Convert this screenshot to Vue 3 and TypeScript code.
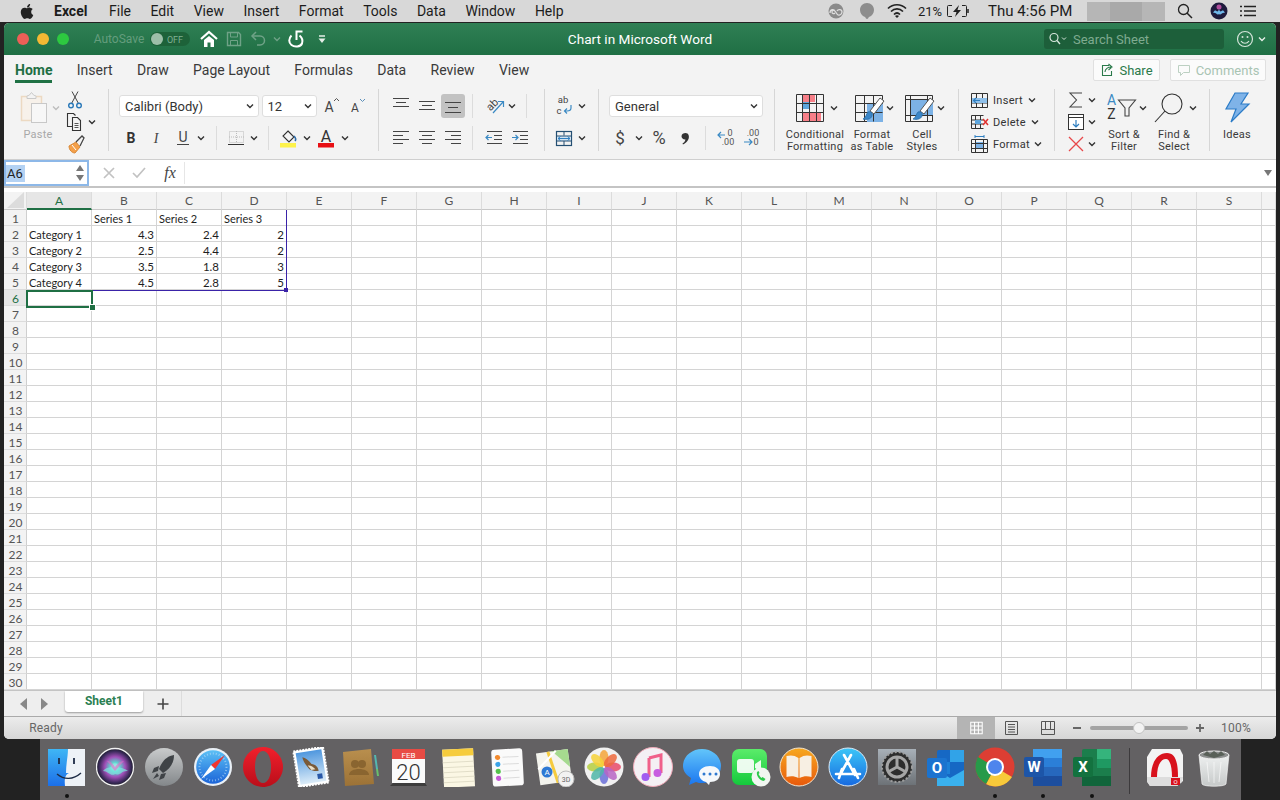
<script setup lang="ts">
import { h, type FunctionalComponent } from 'vue'

type Spec = [string, number, number?, string?, number?]
interface Item { name: string; ml: number; w: number; h: number; cls: string }

function row(x0: number, spec: Spec[]): Item[] {
  let prev = x0
  return spec.map(([name, c, w = 20, cls = '', ht]) => {
    const ml = c - w / 2 - prev
    prev = c + w / 2
    return { name, ml, w, h: ht ?? w, cls }
  })
}

const line = (x1: number, y1: number, x2: number, y2: number, c = '') =>
  `<path d="M${x1} ${y1}H${x2}V${y2}" ${c}/>`
const hl = (ys: [number, number, number][]) => ys.map(([y, a, b]) => line(a, y, b, y)).join('')
const tx = (x: number, y: number, s: string, size: number, fill = '#333', extra = '') =>
  `<text x="${x}" y="${y}" font-size="${size}" fill="${fill}" stroke="none" text-anchor="middle" ${extra}>${s}</text>`
const brush =
  '<path d="M27 6l4 3-10 13-4-3z" fill="#fff" stroke="#555"/><path d="M15 20c3-1 5 1 4 4-1 3-5 4-9 3 3-1 3-5 5-7z" fill="#3a86c8" stroke="#2a6ea8" stroke-width=".8"/>'

const icons: Record<string, string> = {
  chev: '<path d="M2 3.5l3 3 3-3" stroke="currentColor" stroke-width="1.4"/>',
  red: '<circle cx="6" cy="6" r="6" fill="#ec5f57" stroke="none"/>',
  yel: '<circle cx="6" cy="6" r="6" fill="#f4b834" stroke="none"/>',
  grn: '<circle cx="6" cy="6" r="6" fill="#2dc840" stroke="none"/>',
  toggle: '<rect x="0" y="1" width="40" height="14" rx="7" fill="#1d6239" stroke="none"/><circle cx="7" cy="8" r="6" fill="#9dbfa9" stroke="none"/>' + tx(25, 11.5, 'OFF', 9, '#7fae92'),
  home: '<path d="M2 10l8-7 8 7" stroke="#fff" stroke-width="2.2"/><path d="M5 11l5-4 5 4v7h-3.5v-4.5h-3V18H5z" fill="#fff" stroke="none"/>',
  save: '<path d="M3.5 3.5h11l2 2v11h-13z" stroke="#6fa287" stroke-width="1.4"/><path d="M6.500 4v4h7V4M6.500 16.500v-5h7v5" stroke="#6fa287"/>',
  undo: '<path d="M7 3L3 7l4 4" stroke="#6fa287" stroke-width="1.5"/><path d="M3 7h8c6 0 6 9 0 9H8" stroke="#6fa287" stroke-width="1.5"/>',
  redo: '<path d="M5.500 6.500c-3 3-3 7 0 9.500s9 2 10.500-1.500c1-3 0-6-2.500-8" stroke="#fff" stroke-width="2"/><path d="M10.500 11V2.500h6" stroke="#fff" stroke-width="2"/>',
  cust: '<path d="M3 3h6" stroke="#e6efe9" stroke-width="1.400"/><path d="M2.500 5.500h7L6 10z" fill="#e6efe9" stroke="none"/>',
  search: '<rect width="180" height="20" rx="3" fill="#1d5f3a" stroke="none"/><circle cx="10" cy="8.500" r="4" stroke="#d7e6dc" stroke-width="1.200"/><path d="M13 11.500l3 3.500" stroke="#d7e6dc" stroke-width="1.300"/><path d="M18 8.500l2 2 2-2" stroke="#d7e6dc"/>' + tx(67, 14.500, 'Search Sheet', 13, '#7fab90'),
  smile: '<circle cx="10" cy="10" r="7.500" stroke="#d5e4da" stroke-width="1.200"/><circle cx="7.500" cy="8" r="1" fill="#d5e4da" stroke="none"/><circle cx="12.500" cy="8" r="1" fill="#d5e4da" stroke="none"/><path d="M6 12c2 3 6 3 8 0" stroke="#d5e4da" stroke-width="1.200"/>',
  paste: '<path d="M2.500 5.500h20v24h-20z" stroke="#ecd9c2" stroke-width="1.500" fill="#f7f1ea"/><path d="M8 5.500c0-1 1-1 2-1l2.500-3 2.500 3c1 0 2 0 2 1v2H8z" stroke="#c9c9c9" fill="#f3f3f3"/><rect x="12.500" y="12.500" width="15" height="19" stroke="#c8c8c8" fill="#f7f7f7"/>',
  cut: '<path d="M7 1.500l6.500 12M13 1.500L6.500 13.500" stroke="#444"/><circle cx="6" cy="15.500" r="2.300" stroke="#2b79b9" stroke-width="1.400"/><circle cx="14" cy="15.500" r="2.300" stroke="#2b79b9" stroke-width="1.400"/>',
  copy: '<path d="M8.500 14.500h-5v-13h6l2 2" stroke="#333" stroke-width="1.100"/><path d="M8.500 5.500h5l3 3v10h-8z" stroke="#333" stroke-width="1.100"/><path d="M10.500 11.500h4M10.500 13.500h4M10.500 15.500h4" stroke="#555"/>',
  brush: '<path d="M4 12l7-4 4 5-5 6c-3 0-6-3-6-7z" fill="#f4a04a" stroke="#d98a3a"/><path d="M7 11l4 5" stroke="#fff"/><path d="M11 8l6-6 2 2-4 8" stroke="#444" stroke-width="1.300"/>',
  bold: tx(10, 15, 'B', 14, '#333', 'font-weight="700"'),
  ital: tx(10, 15, 'I', 14, '#444', 'font-style="italic" font-family="Liberation Serif"'),
  und: tx(10, 14, 'U', 14, '#444') + '<path d="M4 16.500h12" stroke="#444"/>',
  border: '<path d="M3.500 3.500h14v11h-14z" stroke="#bbb" stroke-dasharray="1 1"/><path d="M10.500 3v12M3 9h15" stroke="#bbb" stroke-dasharray="1 1"/><path d="M2 16.500h16" stroke="#333"/>',
  fill: '<path d="M9 3l6 6-5 5-6-6z" stroke="#333" stroke-width="1.100"/><path d="M15 8c2 2 2 4 1 5" stroke="#2b6aa8" stroke-width="1.700"/><rect x="1" y="15" width="16" height="4.500" fill="#fdf24a" stroke="none"/>',
  color: tx(9, 14, 'A', 16, '#333') + '<rect x="1" y="15" width="16" height="4.500" fill="#e80f14" stroke="none"/>',
  grow: tx(8, 16, 'A', 14, '#444') + '<path d="M13 5l2.500-2.500L18 5" stroke="#555"/>',
  shrink: tx(8, 16, 'A', 12, '#444') + '<path d="M13 3l2.500 2.500L18 3" stroke="#5b8fba"/>',
  aT: hl([[2.5, 2, 18], [6.5, 5, 15], [10.5, 2, 18]]),
  aM: hl([[5.5, 2, 18], [9.5, 5, 15], [13.5, 2, 18]]),
  aB: hl([[8.5, 4, 20], [13.500, 7, 17], [18.5, 4, 20]]),
  aL: hl([[3.5, 2, 18], [7.5, 2, 12], [11.5, 2, 18], [15.5, 2, 12]]),
  aC: hl([[3.5, 2, 18], [7.5, 5, 15], [11.5, 2, 18], [15.5, 5, 15]]),
  aR: hl([[3.5, 2, 18], [7.5, 8, 18], [11.5, 2, 18], [15.5, 8, 18]]),
  ind1: hl([[3.5, 3, 18], [7.5, 10, 18], [11.5, 10, 18], [15.5, 3, 18]]) + '<path d="M8 9.500H2M4.500 7l-2.500 2.500L4.500 12" stroke="#3b8ac4" stroke-width="1.200"/>',
  ind2: hl([[3.5, 3, 18], [7.5, 10, 18], [11.5, 10, 18], [15.5, 3, 18]]) + '<path d="M2 9.500h6M5.500 7L8 9.500 5.500 12" stroke="#3b8ac4" stroke-width="1.200"/>',
  orient: '<g transform="rotate(-45 9 9)">' + tx(8, 11, 'ab', 11, '#444') + '</g><path d="M8 17L18 6M13 5.500h5.500V11" stroke="#3b8ac4" stroke-width="1.200"/>',
  wrap: tx(9, 7, 'ab', 9.5, '#444') + tx(5, 18, 'c', 9.5, '#444') + '<path d="M17 9v3c0 3-2 3-4 3H10.500M13 12.500L10.500 15 13 17.500" stroke="#3b8ac4" stroke-width="1.200"/>',
  merge: '<rect x="2.500" y="3.500" width="15" height="14" stroke="#244f73" stroke-width="1.200"/><rect x="3" y="8" width="14" height="5" fill="#cfe3f3" stroke="none"/><path d="M3 8h14M3 13h14M10 3.500v4M10 13v4" stroke="#244f73"/><path d="M4 10.500h12M6.500 8.500l-2.500 2 2.500 2M13.500 8.500l2.500 2-2.500 2" stroke="#2f7fc1"/>',
  dollar: tx(10, 16, '$', 17, '#444'),
  pct: tx(10, 16, '%', 18, '#444'),
  comma: '<path d="M10.500 5c3 0 4 3 3 6-1 2.500-3 4.500-5.500 5.500l-.5-1c1.500-1 2.500-2 3-4-2 .3-4-1-4-3.200S8.700 5 10.500 5z" fill="#333" stroke="none"/>',
  decL: tx(14, 8, '0', 9, '#555') + tx(12, 17, '.00', 9, '#555') + '<path d="M9 7H2M5 4L2 7l3 3" stroke="#3b8ac4" stroke-width="1.200"/>',
  decR: tx(11, 8, '.00', 9, '#555') + tx(14, 17, '0', 9, '#555') + '<path d="M2 14h8M7 11l3 3-3 3" stroke="#3b8ac4" stroke-width="1.200"/>',
  cf: '<path d="M1.500 2.500h27v27h-27z" stroke="#333"/><rect x="7" y="3" width="13" height="7" fill="#f77f88" stroke="none"/><rect x="7" y="10" width="7" height="7" fill="#5da5dc" stroke="none"/><rect x="7" y="21" width="19" height="8" fill="#f77f88" stroke="none"/><path d="M7.500 2.500v27M14.500 2.500v27M21.500 2.500v27M1.500 11.500h27M1.500 20.500h27" stroke="#333"/>',
  fat: '<path d="M2.500 3.500h27v26h-27z" stroke="#333"/><rect x="14" y="12" width="16" height="18" fill="#7cb2e6" stroke="none"/><path d="M2.500 11.500h27M2.500 20.500h27M11.500 3.500v26M20.500 3.500v26" stroke="#333"/>' + brush,
  cell: '<path d="M2.500 3.500h27v26h-27z" stroke="#333"/><rect x="8" y="8" width="22" height="15" fill="#7cb2e6" stroke="none"/><path d="M2.500 7.500h27M2.500 23.500h27M7.500 3.500v26M24.500 3.500v26" stroke="#333"/>' + brush,
  cIns: '<path d="M2.500 3.500h16v14h-16z" stroke="#333"/><path d="M2.500 8.500h16M2.500 13h16M7.500 3.500v14M13.500 3.500v14" stroke="#333"/><rect x="3" y="8" width="15" height="5" fill="#8fc0ea" stroke="none"/><path d="M11 10.500H4.500M7 8L4.500 10.500 7 13" stroke="#2f7fc1" stroke-width="1.200"/>',
  cDel: '<path d="M2.500 3.500h12M2.500 16.500h12M2.500 3.500v13M6.500 3.500v13M11.500 3.500v13M2.500 8h12M2.500 12h12" stroke="#333"/><rect x="6" y="8" width="6" height="4" fill="#5da5dc" stroke="none"/><path d="M14 7l5 6M19 7l-5 6" stroke="#e0312f" stroke-width="1.500"/>',
  cFmt: '<path d="M2.500 5.500h16v13h-16z" stroke="#333"/><rect x="6" y="8" width="9" height="7" fill="#7cb2e6" stroke="none"/><path d="M2.500 9.500h16M2.500 14.500h16M6.500 5.500v13M14.500 5.500v13" stroke="#333"/><path d="M6 2.500h9M6 1v3M15 1v3" stroke="#2f7fc1"/>',
  sum: '<path d="M16 3H4l6.500 7L4 17h12" stroke="#444" stroke-width="1.100"/>',
  fillD: '<rect x="2.500" y="2.500" width="15" height="15" stroke="#333" fill="#fff"/><path d="M2.500 5.500h15" stroke="#333"/><path d="M10 8v7M7 12l3 3 3-3" stroke="#2f7fc1" stroke-width="1.200"/>',
  clear: '<path d="M3 3l14 14M17 3L3 17" stroke="#e8474a" stroke-width="1.300"/>',
  sort: tx(6.500, 13, 'A', 14, '#3b8ac4') + tx(6.500, 27, 'Z', 14, '#333') + '<path d="M13.500 8h17l-6.500 8v8l-4 0v-8z" stroke="#444" stroke-width="1.100"/>',
  find: '<circle cx="18" cy="12" r="10" stroke="#333" stroke-width="1.100"/><path d="M11 19L1 30" stroke="#333" stroke-width="1.100"/>',
  ideas: '<path d="M13 1h13l-7 11h8L9 30l5-13H4z" fill="#7fb3e8" stroke="#2c7cc7" stroke-width="1.200"/>',
  fxX: '<path d="M2 2l10 10M12 2L2 12" stroke="#c2c2c2" stroke-width="1.700"/>',
  fxC: '<path d="M2 8l4 4 8-9" stroke="#c2c2c2" stroke-width="1.700"/>',
  fxF: tx(10, 15, 'fx', 16, '#444', 'font-style="italic" font-family="Liberation Serif"'),
  arrL: '<path d="M9 2v12L2 8z" fill="#888" stroke="none"/>',
  arrR: '<path d="M1 2v12l7-6z" fill="#888" stroke="none"/>',
  plus: '<path d="M7 1.500v11M1.500 7h11" stroke="#444" stroke-width="1.600"/>',
  view1: '<path d="M13.500 5.500h12v12h-12zM13.500 9.500h12M13.500 13.500h12M17.500 5.500v12M21.500 5.500v12" stroke="#fff" stroke-width="1.100"/>',
  view2: '<path d="M3.500 3.500h12v13h-12z" stroke="#555"/><path d="M6 6.500h7M6 9h7M6 11.500h7M6 14h7" stroke="#555"/>',
  view3: '<path d="M3.500 3.500h13v13h-13zM3.500 11.500h13M7.500 3.500v8M12.500 3.500v8" stroke="#555"/>',
  minus: '<path d="M1 5h8" stroke="#666" stroke-width="2"/>',
  zplus: '<path d="M1 5h8M5 1v8" stroke="#666" stroke-width="1.800"/>',
  slider: '<rect x="0" y="5" width="98" height="4" rx="2" fill="#a3a3a3" stroke="none"/><circle cx="49" cy="7" r="5.500" fill="#f3f3f3" stroke="#c2c2c2"/>'
}

const RowView: FunctionalComponent<{ items: Item[] }> = (p) =>
  h('div', { class: 'row' }, p.items.map((it) => {
    const style = { marginLeft: `${it.ml}px`, width: `${it.w}px` }
    const [kind, text] = it.name.includes(':') ? it.name.split(':') : ['', it.name]
    if (kind === 'sel')
      return h('span', { class: ['t', 'sel', it.cls], style }, [
        h('span', text),
        h('svg', { width: 10, height: 10, viewBox: '0 0 10 10', innerHTML: icons.chev })
      ])
    if (kind === 'txt') return h('span', { class: ['t', 'txt', it.cls], style }, text)
    if (kind === 'lab')
      return h('span', { class: ['t', 'lab', it.cls], style }, text.split('|').map((l) => h('span', l)))
    if (it.name === 'sep') return h('span', { class: ['t', 'sep', it.cls], style })
    return h('svg', {
      class: ['t', 'ic', it.cls], style, width: it.w, height: it.h,
      viewBox: `0 0 ${it.w} ${it.h}`, innerHTML: icons[it.name]
    })
  }))

const menus = ['File', 'Edit', 'View', 'Insert', 'Format', 'Tools', 'Data', 'Window', 'Help']
const tabs = ['Home', 'Insert', 'Draw', 'Page Layout', 'Formulas', 'Data', 'Review', 'View']

const titleLeft = row(4, [['red', 23, 12], ['yel', 43, 12], ['grn', 63, 12], ['txt:AutoSave', 119, 52, 'as'], ['toggle', 170, 40, '', 16],
  ['home', 209, 20], ['save', 234, 20], ['undo', 259, 20], ['chev', 277, 10, 'cfade'], ['redo', 296, 20], ['cust', 322, 12]])
const titleRight = row(940, [['search', 1134, 180, '', 20], ['smile', 1245, 20], ['chev', 1262, 10, 'cwhite']])

interface Col { w: number; kind: string; rows: Item[][] }
interface Group { w: number; cols: Col[] }

const groups: Group[] = [
  { w: 104, cols: [
    { w: 58, kind: 'big', rows: [row(4, [['paste', 34, 30, '', 34], ['chev', 56, 10, 'cfaint']]), row(4, [['lab:Paste', 38, 40, 'faint']])] },
    { w: 46, kind: 'r3', rows: [row(62, [['cut', 75, 20]]), row(62, [['copy', 74, 20], ['chev', 92, 10]]), row(62, [['brush', 75, 20]])] }
  ] },
  { w: 270, cols: [{ w: 270, kind: 'r2', rows: [
    row(108, [['sel:Calibri (Body)', 189, 140], ['sel:12', 289, 55], ['grow', 331, 20], ['shrink', 357, 20]]),
    row(108, [['bold', 131, 20], ['ital', 156, 20], ['und', 183, 20], ['chev', 201, 10], ['sep', 216, 1], ['border', 236, 20], ['chev', 254, 10], ['sep', 268, 1], ['fill', 289, 20], ['chev', 307, 10], ['color', 327, 20], ['chev', 345, 10]])
  ] }] },
  { w: 166, cols: [{ w: 166, kind: 'r2', rows: [
    row(378, [['aT', 401, 20], ['aM', 427, 20], ['aB', 453, 24, 'active'], ['sep', 472, 1], ['orient', 495, 20], ['chev', 512, 10], ['sep', 526, 1]]),
    row(378, [['aL', 401, 20], ['aC', 427, 20], ['aR', 453, 20], ['sep', 472, 1], ['ind1', 494, 20], ['ind2', 520, 20]])
  ] }] },
  { w: 54, cols: [{ w: 54, kind: 'r2', rows: [
    row(544, [['wrap', 564, 20], ['chev', 582, 10]]),
    row(544, [['merge', 564, 20], ['chev', 582, 10]])
  ] }] },
  { w: 176, cols: [{ w: 176, kind: 'r2', rows: [
    row(598, [['sel:General', 686, 154]]),
    row(598, [['dollar', 620, 20], ['chev', 639, 10], ['pct', 659, 20], ['comma', 685, 20], ['sep', 705, 1], ['decL', 726, 20], ['decR', 752, 20]])
  ] }] },
  { w: 184, cols: [{ w: 184, kind: 'big', rows: [
    row(774, [['cf', 810, 30, '', 32], ['chev', 834, 10], ['fat', 869, 32], ['chev', 890, 10], ['cell', 919, 32], ['chev', 941, 10]]),
    row(774, [['lab:Conditional|Formatting', 815, 62], ['lab:Format|as Table', 872, 48], ['lab:Cell|Styles', 922, 40]])
  ] }] },
  { w: 96, cols: [{ w: 96, kind: 'r3', rows: [
    row(958, [['cIns', 979, 20], ['txt:Insert', 1011, 36, 'left'], ['chev', 1032, 10]]),
    row(958, [['cDel', 979, 20], ['txt:Delete', 1011, 36, 'left'], ['chev', 1035, 10]]),
    row(958, [['cFmt', 979, 20], ['txt:Format', 1011, 36, 'left'], ['chev', 1038, 10]])
  ] }] },
  { w: 155, cols: [
    { w: 46, kind: 'r3', rows: [
      row(1054, [['sum', 1076, 20], ['chev', 1092, 10]]),
      row(1054, [['fillD', 1076, 20], ['chev', 1092, 10]]),
      row(1054, [['clear', 1076, 20], ['chev', 1092, 10]])
    ] },
    { w: 109, kind: 'big', rows: [
      row(1100, [['sort', 1121, 32], ['chev', 1143, 10], ['find', 1170, 32], ['chev', 1193, 10]]),
      row(1100, [['lab:Sort &|Filter', 1124, 44], ['lab:Find &|Select', 1174, 44]])
    ] }
  ] },
  { w: 67, cols: [{ w: 67, kind: 'big', rows: [row(1209, [['ideas', 1238, 32]]), row(1209, [['lab:Ideas', 1237, 40]])] }] }
]

const fxRow = row(89, [['fxX', 109, 14], ['fxC', 139, 16], ['fxF', 170, 20], ['sep', 184, 1, 'fxsep']])
const sheetRow = row(4, [['arrL', 23, 10, '', 16], ['arrR', 45, 10, '', 16], ['txt:Sheet1', 104, 78, 'tab'], ['plus', 163, 14], ['sep', 181, 1, 'tallsep']])
const statusRow = row(4, [['txt:Ready', 46, 34, 'ready'], ['view1', 976, 38, 'viewon', 23], ['view2', 1012, 20], ['view3', 1048, 20], ['minus', 1077, 10], ['slider', 1139, 98, '', 14], ['zplus', 1200, 10], ['txt:100%', 1236, 34, 'ready']])

const cols = 'ABCDEFGHIJKLMNOPQRST'.split('')
const rowNums = Array.from({ length: 30 }, (_, i) => i + 1)
const data: Record<string, string> = {
  B1: 'Series 1', C1: 'Series 2', D1: 'Series 3',
  A2: 'Category 1', B2: '4.3', C2: '2.4', D2: '2',
  A3: 'Category 2', B3: '2.5', C3: '4.4', D3: '2',
  A4: 'Category 3', B4: '3.5', C4: '1.8', D4: '3',
  A5: 'Category 4', B5: '4.5', C5: '2.8', D5: '5'
}
const isNum = (s?: string) => !!s && /^[\d.]+$/.test(s)

const ci = (a: string, b: string) => `<defs><linearGradient id="${a}" x1="0" y1="0" x2="0" y2="1">${b}</linearGradient></defs>`
const st = (o: number, c: string) => `<stop offset="${o}" stop-color="${c}"/>`

const dock: { svg: string; dot?: boolean }[] = [
  { dot: true, svg: ci('fa', st(0, '#3fb6f5') + st(1, '#1c6fe8')) + '<rect x="1" y="2" width="37" height="37" fill="url(#fa)"/><path d="M21 2h17v37H18c-1-8 1-12 4-13h-3c0-9 2-17 2-24z" fill="#eef2f7"/><path d="M10 27c7 6 16 6 24-1" fill="none" stroke="#1d2b45" stroke-width="1.400"/><path d="M12 11v6M27 11v6" stroke="#1d2b45" stroke-width="1.800"/>' },
  { svg: '<defs><radialGradient id="si"><stop offset="0" stop-color="#f2fdff"/><stop offset=".25" stop-color="#5fd6d0"/><stop offset=".55" stop-color="#a04fb8"/><stop offset=".85" stop-color="#3a2a5a"/><stop offset="1" stop-color="#1c1c2a"/></radialGradient></defs><circle cx="19" cy="20" r="18.500" fill="url(#si)" stroke="#f2f2f2" stroke-width="1.300"/><path d="M7 24c5-6 8-1 12-8 3 7 7 3 13 8-6-1-8 5-13 3-4 3-7-3-12-3z" fill="#7ce9e0" opacity=".7"/><path d="M11 14c4 0 6 3 8 6 2-3 5-6 9-6-3 3-5 6-9 10-4-4-5-7-8-10z" fill="#e66ac8" opacity=".6"/>' },
  { svg: ci('la', st(0, '#c9cbcc') + st(1, '#83878a')) + '<circle cx="19" cy="20" r="19" fill="url(#la)"/><path d="M29 8c-7 1-12 6-15 14l4 4c7-4 11-10 11-18z" fill="#3f4347"/><path d="M14 19l-5 2-2 5 6-2zM21 26l-2 5-5 2 2-6zM12 26l-4 6 6-3z" fill="#3f4347"/>' },
  { svg: ci('sa', st(0, '#5cc0f5') + st(1, '#1b64d8')) + '<circle cx="19" cy="20" r="19" fill="#eaf0f6"/><circle cx="19" cy="20" r="16.800" fill="url(#sa)"/><circle cx="19" cy="20" r="13.500" fill="none" stroke="#bfe0f8" stroke-width="2" stroke-dasharray="1 2" opacity=".6"/><path d="M31 8L17 18l4 4z" fill="#f2352f"/><path d="M7 32l14-10-4-4z" fill="#fff"/>' },
  { svg: ci('op', st(0, '#f2202c') + st(1, '#b90e1a')) + '<path fill-rule="evenodd" d="M20 0c11 0 20 9 20 20s-9 20-20 20S0 31 0 20 9 0 20 0zm0 4c-5 0-8 7-8 16s3 16 8 16 8-7 8-16-3-16-8-16z" fill="url(#op)"/>' },
  { svg: ci('ma', st(0, '#4f97de') + st(1, '#dcecf8')) + '<g transform="rotate(-9 20 20)"><rect x="5" y="2" width="30" height="36" fill="#fff" stroke="#fff" stroke-dasharray="2 1" stroke-width="2"/><rect x="7" y="4" width="26" height="32" fill="url(#ma)"/><path d="M13 9c3 1 6 4 8 8 4 1 6 4 6 8-4 0-6-1-9-3-2-4-5-8-5-13z" fill="#7a5a38"/><path d="M17 18c3 0 5 2 7 5l-4 0z" fill="#eadfc8"/><rect x="25" y="28" width="5" height="5" fill="#2858a8"/></g>' },
  { svg: ci('co', st(0, '#b98f4e') + st(1, '#9c7236')) + '<path d="M3 5l28-3 3 35-29 2z" fill="url(#co)"/><path d="M34 8l2 0 1 7-2 0zM35 15l2 0 1 7-2 0z" fill="#54b7b0"/><path d="M36 22l2 0 1 7-2 0z" fill="#6ac06a"/><circle cx="15" cy="17" r="4" fill="#8a6530"/><circle cx="22" cy="17" r="4" fill="#8a6530"/><path d="M9 28c0-8 20-8 20 0z" fill="#8a6530"/>' },
  { svg: '<path d="M4 36h32l2 3H1z" fill="#3d3d3d"/><rect x="3" y="2" width="33" height="34" fill="#fbfbfb"/><rect x="3" y="2" width="33" height="10" fill="#e84b44"/><text x="19.500" y="10.500" font-size="8" fill="#fff" text-anchor="middle" font-family="Roboto">FEB</text><text x="19.500" y="33" font-size="22" font-weight="300" fill="#333" text-anchor="middle" font-family="Roboto">20</text>' },
  { svg: '<g transform="rotate(-3 20 20)"><rect x="5" y="2" width="31" height="38" fill="#fbf7e4"/><rect x="5" y="2" width="31" height="7" fill="#f6cc3c"/><path d="M5 15h31M5 20h31M5 25h31M5 30h31M5 35h31" stroke="#dcd8c2" stroke-width=".8"/></g>' },
  { svg: '<g transform="rotate(-3 20 20)"><rect x="5" y="2" width="31" height="37" rx="3" fill="#fafafa"/><circle cx="11" cy="10" r="2.600" fill="#f28a2e"/><circle cx="11" cy="17" r="2.600" fill="#3aa3e8"/><circle cx="11" cy="24" r="2.600" fill="#54c24c"/><circle cx="11" cy="31" r="2.600" fill="#c65ad8"/><path d="M16 10h16M16 17h16M16 24h16M16 31h16" stroke="#dcdcdc"/></g>' },
  { svg: '<g transform="rotate(-8 20 20)"><rect x="3" y="4" width="32" height="32" fill="#f4f4ee"/><path d="M3 4h16l16 18V4z" fill="#a6da8f"/><path d="M15 4l6 32" stroke="#f5cb3e" stroke-width="3"/><path d="M3 20l20-16" stroke="#fff" stroke-width="2"/></g><circle cx="12" cy="25" r="5.500" fill="#2e79d4"/><text x="12" y="28" font-size="8" fill="#fff" text-anchor="middle" font-family="Roboto">A</text><circle cx="31" cy="32" r="8" fill="#f2f2f2" stroke="#bbb"/><text x="31" y="35" font-size="7" fill="#666" text-anchor="middle" font-family="Roboto">3D</text>' },
  { svg: '<circle cx="20" cy="20" r="19.500" fill="#f1f1f1"/><g fill-opacity=".85"><ellipse cx="20" cy="11" rx="4.500" ry="8" fill="#f4a53a"/><ellipse cx="20" cy="29" rx="4.500" ry="8" fill="#6a6fd8"/><ellipse cx="11" cy="20" rx="8" ry="4.500" fill="#b5cf3f"/><ellipse cx="29" cy="20" rx="8" ry="4.500" fill="#e84a6a"/><ellipse cx="13.600" cy="13.600" rx="4.500" ry="8" fill="#f6d23a" transform="rotate(-45 13.600 13.600)"/><ellipse cx="26.400" cy="13.600" rx="4.500" ry="8" fill="#ee6b3e" transform="rotate(45 26.400 13.600)"/><ellipse cx="26.400" cy="26.400" rx="4.500" ry="8" fill="#b765c4" transform="rotate(-45 26.400 26.400)"/><ellipse cx="13.600" cy="26.400" rx="4.500" ry="8" fill="#4fb6a8" transform="rotate(45 13.600 26.400)"/></g>' },
  { svg: ci('mu', st(0, '#ff5f7e') + st(1, '#b05cf0')) + '<circle cx="20" cy="20" r="19.500" fill="#f4f0f4" stroke="#f0a9b8"/><path d="M16 11l12-3v18M16 11v19" fill="none" stroke="#f0608a" stroke-width="3"/><circle cx="12.500" cy="30" r="4" fill="#a05cf0"/><circle cx="24.500" cy="26" r="4" fill="#c85ce0"/>' },
  { svg: ci('me', st(0, '#62c5fa') + st(1, '#1a76f0')) + '<path d="M20 2c10 0 19 7 19 17s-9 17-19 17c-2 0-4 0-6-1l-7 3 2-7C4 28 1 24 1 19 1 9 10 2 20 2z" fill="url(#me)"/><path d="M28 19c6 0 10 3 10 8s-4 8-10 8l-1 3-3-3c-4-1-7-4-7-8 0-5 5-8 11-8z" fill="#f6f8fb"/><circle cx="22" cy="27" r="1.500" fill="#2e78d0"/><circle cx="28" cy="27" r="1.500" fill="#2e78d0"/><circle cx="34" cy="27" r="1.500" fill="#2e78d0"/>' },
  { svg: ci('ft', st(0, '#5bec6a') + st(1, '#14c93c')) + '<rect x="1" y="2" width="35" height="36" rx="7" fill="url(#ft)"/><rect x="6" y="12" width="17" height="14" rx="3" fill="#fff" opacity=".9"/><path d="M24 17l6-4v12l-6-4z" fill="#fff" opacity=".9"/><circle cx="30" cy="30" r="9.500" fill="#f1f6f1"/><path d="M26 25c-1 4 3 9 7 9l1.500-2-3-2-1 1c-1-1-2-2-3-4l1-1-1-2z" fill="#2cc84a"/>' },
  { svg: ci('bo', st(0, '#f7a81f') + st(1, '#e8590c')) + '<circle cx="20" cy="20" r="19" fill="url(#bo)" stroke="#f3e5d0"/><path d="M19.500 11c-4-3-8-3-12-2v21c4-1 8-1 12 1zM20.500 11c4-3 8-3 12-2v21c-4-1-8-1-12 1z" fill="#f7efe3"/>' },
  { svg: ci('ap', st(0, '#3cc6f7') + st(1, '#1769e0')) + '<circle cx="20" cy="20" r="19" fill="url(#ap)" stroke="#dceaf7"/><path d="M23 8L12 28M16 8l11 20M8 27h24M14 22l-3 9M26 22l4 9" stroke="#fff" stroke-width="2.600" fill="none" stroke-linecap="round"/>' },
  { svg: ci('sy', st(0, '#a8b0b8') + st(1, '#6d7277')) + '<rect x="1" y="2" width="38" height="36" fill="url(#sy)"/><circle cx="20" cy="20" r="15" fill="#2d2d2d"/><circle cx="20" cy="20" r="15" fill="none" stroke="#9d9d9d" stroke-width="2" stroke-dasharray="2 2"/><circle cx="20" cy="20" r="10" fill="none" stroke="#a5a5a5" stroke-width="3"/><path d="M20 20V10M20 20l9 5M20 20l-9 5" stroke="#a5a5a5" stroke-width="3"/>' },
  { svg: '<rect x="11" y="3" width="27" height="36" rx="2" fill="#1668c4"/><rect x="24" y="3" width="14" height="12" fill="#31a3e8"/><rect x="11" y="15" width="13" height="12" fill="#1d7fd6"/><path d="M11 23l13 8 14-8v16H11z" fill="#3ab1ee"/><rect x="1" y="11" width="20" height="20" rx="2" fill="#1b73cf"/><text x="11" y="26" font-size="15" font-weight="700" fill="#fff" text-anchor="middle" font-family="Roboto">O</text>' },
  { dot: true, svg: '<circle cx="20" cy="20" r="19.500" fill="#dd3e33"/><path d="M20 20L37 30A19.500 19.500 0 0 1 11 37z" fill="#f7c93a"/><path d="M20 20L11 37A19.500 19.500 0 0 1 3 10z" fill="#279a49"/><circle cx="20" cy="20" r="9" fill="#fff"/><circle cx="20" cy="20" r="7" fill="#4e85ed"/>' },
  { dot: true, svg: '<rect x="10" y="2" width="29" height="37" rx="2" fill="#2b7fd8"/><rect x="10" y="2" width="29" height="9" fill="#41a0ef"/><rect x="10" y="20" width="29" height="9" fill="#2768bd"/><rect x="10" y="29" width="29" height="10" fill="#1d4e9e"/><rect x="1" y="10" width="20" height="20" rx="2" fill="#1d55a8"/><text x="11" y="25" font-size="15" font-weight="700" fill="#fff" text-anchor="middle" font-family="Roboto">W</text>' },
  { dot: true, svg: '<rect x="10" y="2" width="29" height="37" rx="2" fill="#1b7e4c"/><rect x="25" y="2" width="14" height="10" fill="#35b47c"/><rect x="25" y="12" width="14" height="9" fill="#1f9962"/><rect x="10" y="29" width="29" height="10" fill="#11653b"/><rect x="1" y="10" width="20" height="20" rx="2" fill="#13723f"/><text x="11" y="25" font-size="15" font-weight="700" fill="#fff" text-anchor="middle" font-family="Roboto">X</text>' }
]
const dockEnd = [
  '<path d="M2 10L7 2h28l3 6v26l-6 5H5l-3-5z" fill="#f3f3f3"/><path d="M6 30c0-14 6-24 16-24 8 0 11 8 11 24h-6c0-10-2-18-6-18-6 0-9 8-9 18z" fill="#d8121d"/><path d="M2 30l4 0 27 0 5 0-1 5-5 4H5l-3-4z" fill="#ddd"/><rect x="26" y="31" width="9" height="7" fill="#d8121d"/><text x="30.500" y="37" font-size="6" fill="#fff" text-anchor="middle" font-family="Roboto">O</text>',
  ci('tr', st(0, '#eef0f0') + st(1, '#c6c9c9')) + '<path d="M5 8h30l-3 29c-1 3-23 3-24 0z" fill="url(#tr)" stroke="#fff" stroke-width=".6"/><ellipse cx="20" cy="8" rx="15" ry="4" fill="#8e9090" stroke="#eee"/><path d="M9 8l4-4 3 3 4-3 4 3 3-3 4 4-11 3z" fill="#596058"/><path d="M13 15l2 20M20 15v21M27 15l-2 20" stroke="#fff" opacity=".6"/>'
]
</script>

<template>
  <div class="screen">
    <header class="menubar">
      <svg class="apple" width="14" height="17" viewBox="0 0 384 512"><path d="M318.700 268.700c-.2-36.700 16.400-64.400 50-84.800-18.800-26.900-47.200-41.700-84.700-44.600-35.500-2.800-74.300 20.700-88.500 20.700-15 0-49.400-19.700-76.400-19.700C63.300 141.200 4 184.800 4 273.500q0 39.300 14.400 81.200c12.800 36.700 59 126.700 107.200 125.200 25.200-.6 43-17.900 75.800-17.900 31.800 0 48.300 17.900 76.400 17.900 48.600-.7 90.400-82.500 102.600-119.300-65.200-30.700-61.700-90-61.700-91.900zm-56.600-164.200c27.300-32.400 24.800-61.900 24-72.500-24.100 1.400-52 16.400-67.900 34.900-17.500 19.800-27.800 44.300-25.600 71.900 26.100 2 49.900-11.400 69.500-34.300z" fill="#222"/></svg>
      <strong class="appname">Excel</strong>
      <nav class="menus"><span v-for="m in menus" :key="m">{{ m }}</span></nav>
      <div class="status">
        <svg width="20" height="16" viewBox="0 0 20 16" class="cc"><circle cx="10" cy="8" r="7.500" fill="#8a8a8a"/><path d="M4 10c0-4 4-4 5-2l2 3c1 2 5 1 5-2s-4-3-5-1M9 8c-1-1-3-1-3 1s2 2 3 1" fill="none" stroke="#ddd" stroke-width="1.300"/></svg>
        <svg width="14" height="18" viewBox="0 0 14 18" class="drop"><path d="M7 17c-1 0-1-1-2-2-3-1-5-4-5-7 0-4 3-7 7-7s7 3 7 7c0 3-2 6-5 7-1 1-1 2-2 2z" fill="#8d8d8d"/></svg>
        <svg width="20" height="16" viewBox="0 0 20 16" class="wifi"><path d="M1 5.500c5-5 13-5 18 0M4 8.500c3.500-3.500 8.500-3.500 12 0M7 11.500c2-2 4-2 6 0" fill="none" stroke="#222" stroke-width="1.700"/><path d="M8 13c1-1 3-1 4 0l-2 2z" fill="#222"/></svg>
        <span class="pct">21%</span>
        <svg width="24" height="14" viewBox="0 0 24 14" class="bat"><path d="M6 1.500H2.500a1 1 0 0 0-1 1v9a1 1 0 0 0 1 1H6M16 1.500h3.500a1 1 0 0 1 1 1v9a1 1 0 0 1-1 1H16" fill="none" stroke="#222"/><path d="M22 5v4" stroke="#222" stroke-width="1.500"/><path d="M13 1L7 8h3.500L9 13l6-7h-3.500z" fill="#222"/></svg>
        <span class="clock">Thu 4:56 PM</span>
        <div class="blur"><i></i></div>
        <svg width="16" height="16" viewBox="0 0 16 16" class="srch"><circle cx="6.500" cy="6.500" r="5" fill="none" stroke="#222" stroke-width="1.300"/><path d="M10 10l5 5" stroke="#222" stroke-width="1.500"/></svg>
        <svg width="18" height="18" viewBox="0 0 18 18" class="siri"><circle cx="9" cy="9" r="8.500" fill="#1e1a3d"/><path d="M3 11c3-6 4 2 6-4 2 6 3-2 6 4-3-1-4 3-6 1-2 2-3-2-6-1z" fill="#6fb7ea"/><circle cx="9" cy="5" r="2.500" fill="#d45ab4" opacity=".8"/></svg>
        <svg width="18" height="12" viewBox="0 0 18 12" class="list"><path d="M5 1.500h12M5 6h12M5 10.500h12" stroke="#222" stroke-width="1.400"/><path d="M1 1.500h2M1 6h2M1 10.500h2" stroke="#222" stroke-width="1.400"/></svg>
      </div>
    </header>

    <div class="desk">
      <main class="win">
        <div class="titlebar">
          <RowView :items="titleLeft" class="tl" />
          <div class="doc">Chart in Microsoft Word</div>
          <RowView :items="titleRight" class="tr" />
        </div>

        <div class="tabbar">
          <nav class="tabs">
            <span v-for="(t, i) in tabs" :key="t" :class="{ on: i === 0 }">{{ t }}</span>
          </nav>
          <button class="share">
            <svg width="14" height="14" viewBox="0 0 14 14"><path d="M9 2.500h-6.500v10h9V8M5 9c0-3 3-5 6-5M8.500 1L12 4 8.500 7" fill="none" stroke="#2b7a4b" stroke-width="1.100"/></svg>
            Share
          </button>
          <button class="comments">
            <svg width="14" height="14" viewBox="0 0 14 14"><path d="M1.500 2.500h11v7h-6l-3 3v-3h-2z" fill="none" stroke="#bcd0c2"/></svg>
            Comments
          </button>
        </div>

        <div class="ribbon">
          <section v-for="(g, gi) in groups" :key="gi" class="group" :class="{ last: gi === groups.length - 1 }" :style="{ width: g.w + 'px' }">
            <div v-for="(c, ci2) in g.cols" :key="ci2" class="col" :class="c.kind" :style="{ width: c.w + 'px' }">
              <RowView v-for="(r, ri) in c.rows" :key="ri" :items="r" />
            </div>
          </section>
        </div>

        <div class="fxbar">
          <div class="namebox">
            <span class="nbsel">A6</span>
            <svg width="10" height="20" viewBox="0 0 10 20"><path d="M5 2l4 6H1zM5 18L1 12h8z" fill="#777"/></svg>
          </div>
          <RowView :items="fxRow" class="fxrow" />
          <svg class="fxdrop" width="10" height="8" viewBox="0 0 10 8"><path d="M1 1h8L5 7z" fill="#777"/></svg>
        </div>

        <div class="sheet">
          <div class="ghead corner"><svg width="18" height="16" viewBox="0 0 18 16"><path d="M17 0v16H0z" fill="#dcdcdc"/></svg></div>
          <div v-for="c in cols" :key="c" class="ghead" :class="{ act: c === 'A' }">{{ c === 'T' ? '' : c }}</div>
          <template v-for="r in rowNums" :key="r">
            <div class="rhead" :class="{ act: r === 6 }">{{ r }}</div>
            <div v-for="c in cols" :key="c" class="cell" :class="{ num: isNum(data[c + r]) }">{{ data[c + r] }}</div>
          </template>
          <div class="range"><i></i></div>
          <div class="cursor"><i></i></div>
        </div>

        <RowView :items="sheetRow" class="sheetbar" />
        <RowView :items="statusRow" class="statusbar" />
      </main>
    </div>

    <footer class="dock">
      <div v-for="(d, i) in dock" :key="i" class="di" :class="{ dot: d.dot }">
        <svg width="40" height="40" viewBox="0 0 40 40" v-html="d.svg"></svg>
      </div>
      <span class="dsep"></span>
      <div v-for="(d, i) in dockEnd" :key="'e' + i" class="di">
        <svg width="40" height="40" viewBox="0 0 40 40" v-html="d"></svg>
      </div>
    </footer>
  </div>
</template>

<style scoped>
.screen { width: 1280px; height: 800px; overflow: hidden; background: #222; display: flex; flex-direction: column; font-family: Roboto, "Liberation Sans", sans-serif; color: #333; }
.menubar { height: 22px; flex: none; background: #d8d8d8; display: flex; align-items: center; border-bottom: 1px solid #222; box-sizing: content-box; font-size: 14px; color: #1c1c1c; }
.apple { margin-left: 20px; }
.appname { margin-left: 20px; width: 36px; font-weight: 700; }
.menus { display: flex; gap: 19.500px; margin-left: 19px; }
.status { margin-left: auto; display: flex; align-items: center; height: 22px; }
.cc { margin-right: 14px; }
.drop { margin-right: 13px; }
.wifi { margin-right: 11px; }
.pct { width: 25px; font-size: 13px; }
.bat { margin-right: 18px; margin-left: 3px; }
.clock { width: 86px; font-size: 15px; white-space: nowrap; }
.blur { width: 78px; height: 19px; margin-left: 13px; background: #b6b6b6; display: flex; justify-content: center; }
.blur i { width: 32px; background: #a9a9a9; }
.srch { margin-left: 12px; }
.siri { margin-left: 17px; }
.list { margin-left: 11px; margin-right: 23px; }
.desk { height: 716px; flex: none; padding: 0 4px; }
.win { height: 716px; border-radius: 5px; overflow: hidden; background: #fff; display: flex; flex-direction: column; }
.titlebar { height: 32px; flex: none; background: linear-gradient(#2f7f54, #1f6f44); display: flex; align-items: center; }
.tl { width: 336px; }
.doc { width: 600px; text-align: center; color: #fff; font-size: 13.600px; }
.tr { width: 336px; }
.tabbar { height: 30px; flex: none; background: #f3f3f3; display: flex; align-items: center; padding-left: 11px; }
.tabs { display: flex; gap: 24.300px; font-size: 14px; color: #3a3a3a; margin-right: auto; align-self: flex-start; margin-top: 6px; }
.tabs span { height: 22px; line-height: 19px; box-sizing: border-box; }
.tabs .on { font-weight: 700; color: #1f6f44; border-bottom: 3px solid #1f7144; }
.share, .comments { font: inherit; font-size: 13px; height: 22px; background: #fbfbfb; border: 1px solid #e0e0e0; border-radius: 2px; display: flex; align-items: center; justify-content: center; gap: 5px; padding: 0; }
.share { width: 67px; color: #2b7a4b; margin-right: 10px; }
.comments { width: 96px; color: #a9c4b3; margin-right: 10px; }
.ribbon { flex: none; background: #f3f3f3; display: flex; border-bottom: 1px solid #cfcfcf; box-sizing: content-box; padding-top: 4px; height: 70px; }
.group { height: 62px; display: flex; flex: none; border-right: 1px solid #d6d6d6; box-sizing: content-box; margin-right: -1px; }
.group.last { border-right: 0; }
.col { flex: none; display: flex; flex-direction: column; }
.r2 { padding-top: 6px; gap: 10px; }
.big > :first-child { height: 38px; }
.big > :last-child { height: 24px; align-items: flex-start; padding-top: 2px; }
.fxbar { height: 26px; flex: none; background: #fff; display: flex; align-items: center; border-bottom: 2px solid #c4c4c4; box-sizing: content-box; }
.namebox { width: 79px; height: 22px; border: 2px solid #8db8e8; display: flex; align-items: center; justify-content: space-between; padding-right: 2px; box-sizing: content-box; font-size: 13px; flex: none; }
.nbsel { background: #b4d2f3; padding: 0 2px 0 1px; line-height: 17px; color: #222; }
.fxdrop { margin-left: auto; margin-right: 3px; }
.sheet { position: relative; margin-top: 4px; flex: none; display: grid; grid-template-columns: 23px repeat(19, 65px) 1fr; grid-template-rows: 18px repeat(30, 16px); font-family: Lato, "Liberation Sans", sans-serif; }
.ghead { background: #f3f3f3; border-right: 1px solid #dcdcdc; border-bottom: 1px solid #c8c8c8; text-align: center; font-size: 12px; line-height: 17px; color: #555; box-sizing: border-box; }
.corner { display: flex; justify-content: flex-end; align-items: flex-start; padding-right: 1px; }
.ghead.act { color: #1f6f44; background: #e6e6e6; border-bottom: 2px solid #1f6f44; }
.rhead { background: #f3f3f3; border-right: 1px solid #cfcfcf; border-bottom: 1px solid #dcdcdc; text-align: center; font-size: 12px; line-height: 18px; color: #555; box-sizing: border-box; padding-left: 1px; overflow: hidden; }
.rhead.act { color: #1f6f44; background: #e6e6e6; }
.cell { border-right: 1px solid #d4d4d4; border-bottom: 1px solid #d4d4d4; box-sizing: border-box; font-size: 11px; line-height: 17px; padding: 0 2px; white-space: nowrap; color: #1e1e1e; overflow: hidden; }
.cell.num { text-align: right; font-size: 11.500px; }
.range { position: absolute; left: 88px; top: 18px; width: 195px; height: 81px; border-right: 1px solid #3a23a8; border-bottom: 1px solid #3a23a8; box-sizing: border-box; }
.range i { position: absolute; right: -2px; bottom: -2px; width: 4px; height: 4px; background: #3a23a8; }
.cursor { position: absolute; left: 22px; top: 98px; width: 67px; height: 18px; border: 2px solid #1f6f44; box-sizing: border-box; }
.cursor i { position: absolute; right: -4px; bottom: -4px; width: 5px; height: 5px; background: #1f6f44; border: 1px solid #fff; box-sizing: content-box; margin: -1px; }
.sheetbar { flex: none; height: 25px; background: #eeeeee; border-top: 1px solid #c4c4c4; border-bottom: 1px solid #aaa; box-sizing: content-box; }
.statusbar { flex: none; height: 22px; background: linear-gradient(#ececec, #d6d6d6); }
.dock { height: 61px; flex: none; margin: 0 39px 0 40px; background: #636163; display: flex; padding-left: 3px; }
.di { width: 48.800px; flex: none; height: 61px; padding-top: 8px; box-sizing: border-box; display: flex; justify-content: center; position: relative; }
.di.dot::after { content: ""; position: absolute; left: 50%; margin-left: -2px; top: 55px; width: 4px; height: 4px; border-radius: 50%; background: #111; }
.dsep { width: 1px; height: 46px; background: #3c3a3c; margin: 9px 11px 0 12px; flex: none; }
</style>

<style>
.row { display: flex; align-items: center; height: 22px; flex: none; }
.t { flex: none; display: block; white-space: nowrap; color: #333; }
.ic { fill: none; stroke: #444; stroke-width: 1; overflow: visible; font-family: Roboto, "Liberation Sans", sans-serif; }
.sel { height: 22px; box-sizing: border-box; background: #fff; border: 1px solid #dedede; border-radius: 3px; display: flex; align-items: center; justify-content: space-between; padding: 0 3px 0 5px; font-size: 13px; color: #333; }
.sel svg { fill: none; flex: none; }
.txt { font-size: 11px; text-align: center; letter-spacing: .3px; }
.txt.left { text-align: left; }
.txt.as { color: #649d7d; font-size: 12px; letter-spacing: 0; }
.lab { display: flex; flex-direction: column; align-items: center; font-size: 11px; line-height: 12px; letter-spacing: .25px; color: #3a3a3a; }
.lab.faint { color: #a8a8a8; }
.sep { height: 24px; background: #dcdcdc; }
.tallsep { height: 25px; }
.fxsep { height: 22px; background: #e6e6e6; }
.cfaint { color: #bdbdbd; }
.cfade { color: #6fa287; }
.cwhite { color: #e6efe9; }
.active { background: #c2c2c2; border-radius: 3px; }
.tab { height: 21px; align-self: flex-start; background: #fff; color: #2b8052; font-weight: 700; font-size: 12px; line-height: 20px; letter-spacing: 0; border-radius: 0 0 3px 3px; box-shadow: 0 1px 2px rgba(0,0,0,.35); }
.ready { font-size: 12px; color: #666; letter-spacing: .2px; }
.viewon { background: #b4b4b4; height: 22px; }
.sheetbar.row { height: 25px; }
.statusbar.row { height: 22px; }
</style>
